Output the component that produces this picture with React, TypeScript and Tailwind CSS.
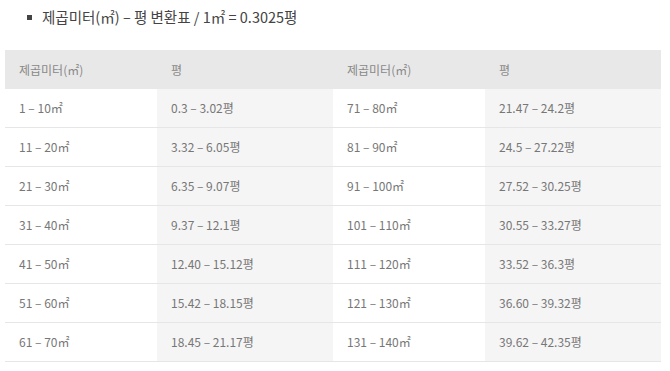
const rows: [string, string, string, string][] = [
  ['1 – 10㎡', '0.3 – 3.02평', '71 – 80㎡', '21.47 – 24.2평'],
  ['11 – 20㎡', '3.32 – 6.05평', '81 – 90㎡', '24.5 – 27.22평'],
  ['21 – 30㎡', '6.35 – 9.07평', '91 – 100㎡', '27.52 – 30.25평'],
  ['31 – 40㎡', '9.37 – 12.1평', '101 – 110㎡', '30.55 – 33.27평'],
  ['41 – 50㎡', '12.40 – 15.12평', '111 – 120㎡', '33.52 – 36.3평'],
  ['51 – 60㎡', '15.42 – 18.15평', '121 – 130㎡', '36.60 – 39.32평'],
  ['61 – 70㎡', '18.45 – 21.17평', '131 – 140㎡', '39.62 – 42.35평'],
];

export default function App() {
  return (
    <div className="w-[670px] h-[371px] bg-white font-['Noto_Sans_CJK_KR',sans-serif]">
      {/* Title */}
      <div className="flex items-center h-[34px] pl-[27px] text-[14.5px] text-[#444]">
        <span className="w-[5px] h-[5px] bg-[#444] mr-[10px]" />
        <span>제곱미터(㎡) – 평 변환표 / 1㎡ = 0.3025평</span>
      </div>

      {/* Table */}
      <div className="ml-[5px] mt-[16px] w-[656px] text-[12px] text-[#777]">
        <div className="grid grid-cols-[152px_176px_152px_176px] h-[39px] bg-[#e8e8e8] text-[#888]">
          <div className="flex items-center pl-[14px]">제곱미터(㎡)</div>
          <div className="flex items-center pl-[14px]">평</div>
          <div className="flex items-center pl-[14px]">제곱미터(㎡)</div>
          <div className="flex items-center pl-[14px]">평</div>
        </div>
        {rows.map((r, i) => (
          <div
            key={i}
            className="grid grid-cols-[152px_176px_152px_176px] h-[39px] border-b border-[#e6e6e6]"
          >
            <div className="flex items-center pl-[14px]">{r[0]}</div>
            <div className="flex items-center pl-[14px] bg-[#f5f5f5]">{r[1]}</div>
            <div className="flex items-center pl-[14px]">{r[2]}</div>
            <div className="flex items-center pl-[14px] bg-[#f5f5f5]">{r[3]}</div>
          </div>
        ))}
      </div>
    </div>
  );
}
